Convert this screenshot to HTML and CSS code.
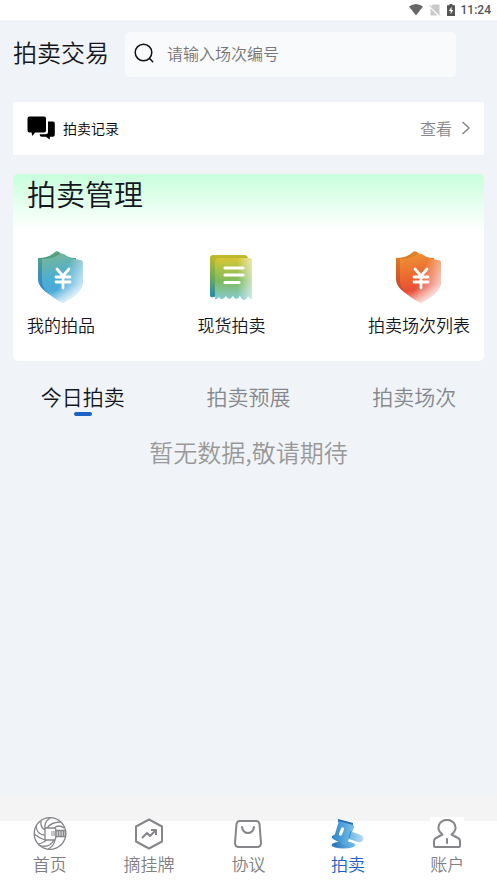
FILE: index.html
```html
<!DOCTYPE html>
<html lang="zh-CN">
<head>
<meta charset="utf-8">
<meta name="viewport" content="width=device-width, initial-scale=1">
<title>拍卖交易</title>
<link rel="stylesheet" href="styles.css">
</head>
<body>
<div class="status">
  <svg width="14" height="12" viewBox="0 0 14 12" aria-hidden="true"><path d="M0 2.6Q7-2.6 14 2.6L7 11.5Z" fill="#666"/></svg>
  <svg width="12" height="12" viewBox="0 0 12 12" aria-hidden="true"><path d="M4 .5h6.5V11L2 2.5ZM1.500 4.300 8.500 11.500h-7Z" fill="#c9c9c9"/><path d="M.5 1 11 11.500" stroke="#bbb"/></svg>
  <svg width="8" height="12" viewBox="0 0 8 12" aria-hidden="true"><path d="M2.500 0h3v1.200H8V12H0V1.200h2.500Z" fill="#555"/><path d="M4.600 2.800 1.800 7h1.800v3.300L6.300 6H4.600Z" fill="#fff"/></svg>
  <span class="clock">11:24</span>
</div>
<header class="header">
  <h1 class="title">拍卖交易</h1>
  <label class="search">
    <svg width="20" height="20" viewBox="0 0 20 20" fill="none" stroke="#111" stroke-width="1.500" stroke-linecap="round" aria-hidden="true"><circle cx="9.500" cy="9.500" r="8.300"/><path d="m15.500 15.500 3.200 3.200"/></svg>
    <input class="search-input" type="search" placeholder="请输入场次编号" aria-label="请输入场次编号">
  </label>
</header>
<main class="main">
  <a class="record" href="#records">
    <svg width="28" height="24" viewBox="0 0 28 24" aria-hidden="true"><path d="M2.500.5H17q2 0 2 2v12q0 2-2 2H8L5.500 20 4.500 16.500h-2q-2 0-2-2v-12q0-2 2-2ZM21 5.500h5q1.800 0 1.800 1.800v11.500q0 2-2 2h-3V23.500l-4-2.700h-4q-2 0-2.300-2.600H18.500q2.500 0 2.500-2.500Z"/></svg>
    <span class="record-name">拍卖记录</span>
    <span class="record-more">查看</span>
    <svg width="10" height="16" viewBox="0 0 10 16" fill="none" stroke="#888" stroke-width="1.500" aria-hidden="true"><path d="m1.500 2 6.500 6-6.500 6"/></svg>
  </a>
  <section class="panel">
    <h2 class="panel-title">拍卖管理</h2>
    <div class="tools">
      <a class="tool" href="#mine">
        <svg class="tool-icon" viewBox="1 0 48 54" aria-hidden="true">
          <defs>
            <linearGradient id="blueBack" x2="0" y2="1"><stop stop-color="#58a578"/><stop offset=".55" stop-color="#388fb9"/><stop offset="1" stop-color="#3186bf"/></linearGradient>
            <linearGradient id="blueFront" x1=".35" y1="0" x2=".55" y2="1"><stop stop-color="#78b69a"/><stop offset=".45" stop-color="#4caed0"/><stop offset=".7" stop-color="#47aadb"/><stop offset="1" stop-color="#cde7f2"/></linearGradient>
            <linearGradient id="fade" x1=".5" y1=".45" x2="1" y2=".72"><stop stop-color="#fff" stop-opacity="0"/><stop offset="1" stop-color="#fff" stop-opacity=".8"/></linearGradient>
          </defs>
          <path d="M2 8Q13 8 19 2q2-1.500 4 0 6 6 17 6v20q0 12-19 20Q2 40 2 29Z" fill="url(#blueBack)"/>
          <path d="M6 9q12 0 18-5 2-1 4 0 6 5 16 6 3 0 3 3v18q0 12-20 22Q6 43 6 31Z" fill="url(#blueFront)"/>
          <path d="M6 9q12 0 18-5 2-1 4 0 6 5 16 6 3 0 3 3v18q0 12-20 22Q6 43 6 31Z" fill="url(#fade)"/>
          <path d="m21 19 6 7 6-7M20 27h14M20 32h14M27 26v12" fill="none" stroke="#fff" stroke-width="2.800" stroke-linecap="round"/>
        </svg>
        <span>我的拍品</span>
      </a>
      <a class="tool" href="#spot">
        <svg class="tool-icon" viewBox="1 0 48 54" aria-hidden="true">
          <defs>
            <linearGradient id="billBack" x2="0" y2="1"><stop stop-color="#c3ba28"/><stop offset=".5" stop-color="#72ad55"/><stop offset="1" stop-color="#2389aa"/></linearGradient>
            <linearGradient id="billFront" x2="0" y2="1"><stop stop-color="#d5c732"/><stop offset=".55" stop-color="#7fba5e"/><stop offset="1" stop-color="#86cbd6"/></linearGradient>
            <linearGradient id="billFade" x1=".6" x2="1"><stop stop-color="#fff" stop-opacity="0"/><stop offset="1" stop-color="#fff" stop-opacity=".6"/></linearGradient>
          </defs>
          <path d="M6 5h31q4 0 4 4v34L6 47q-3 1-3-2V8q0-3 3-3Z" fill="url(#billBack)"/>
          <path d="M12 8h30q3 0 3 3v38q-2 0-4-3-3 6-6 3l-2-3q-4 6-7 0-4 6-7 0-4 6-7 1-2 3-4 2V12q0-4 4-4Z" fill="url(#billFront)"/>
          <path d="M12 8h30q3 0 3 3v38q-2 0-4-3-3 6-6 3l-2-3q-4 6-7 0-4 6-7 0-4 6-7 1-2 3-4 2V12q0-4 4-4Z" fill="url(#billFade)"/>
          <path d="M18 18h18M18 25h18M18 32.500h14" stroke="#fff" stroke-width="3.200" stroke-linecap="round"/>
        </svg>
        <span>现货拍卖</span>
      </a>
      <a class="tool" href="#sessions">
        <svg class="tool-icon" viewBox="1 0 48 54" aria-hidden="true">
          <defs>
            <linearGradient id="redBack" x2="0" y2="1"><stop stop-color="#df8a20"/><stop offset=".5" stop-color="#d75a28"/><stop offset="1" stop-color="#cf3928"/></linearGradient>
            <linearGradient id="redFront" x1=".35" y1="0" x2=".55" y2="1"><stop stop-color="#ed9234"/><stop offset=".45" stop-color="#eb6630"/><stop offset=".7" stop-color="#e84d36"/><stop offset="1" stop-color="#f5c9c4"/></linearGradient>
          </defs>
          <path d="M2 8Q13 8 19 2q2-1.500 4 0 6 6 17 6v20q0 12-19 20Q2 40 2 29Z" fill="url(#redBack)"/>
          <path d="M6 9q12 0 18-5 2-1 4 0 6 5 16 6 3 0 3 3v18q0 12-20 22Q6 43 6 31Z" fill="url(#redFront)"/>
          <path d="M6 9q12 0 18-5 2-1 4 0 6 5 16 6 3 0 3 3v18q0 12-20 22Q6 43 6 31Z" fill="url(#fade)"/>
          <path d="m21 19 6 7 6-7M20 27h14M20 32h14M27 26v12" fill="none" stroke="#fff" stroke-width="2.800" stroke-linecap="round"/>
        </svg>
        <span>拍卖场次列表</span>
      </a>
    </div>
  </section>
  <div class="tabs" role="tablist">
    <button class="tab tab-active" type="button" role="tab" aria-selected="true">今日拍卖</button>
    <button class="tab" type="button" role="tab" aria-selected="false">拍卖预展</button>
    <button class="tab" type="button" role="tab" aria-selected="false">拍卖场次</button>
  </div>
  <p class="empty">暂无数据,敬请期待</p>
</main>
<nav class="nav">
  <a class="nav-item" href="#home">
    <svg class="nav-icon" viewBox="0 0 34 34" fill="none" stroke="#85858a" stroke-width="1.300" aria-hidden="true"><circle cx="17" cy="16.500" r="15.800"/><path d="M12 11h10l1 2v7l-1 3H12ZM12 18Q4 18 3 9M12 12Q11 5 17 1M12 13Q7 10 8 4M14 11q4-6 14-6M21 11q5-4 10 0M12 23Q6 21 1 17M14 23q-6 4-9 4M21 23q-5 9-15 5M22 23q-1 6-7 9"/><path d="M23 13.500h9.500v6H23Z" fill="#ccc"/><path d="M19 14v5M21 14v5M25.500 14v5M28 14v5M30.500 14v5" stroke-width="1"/></svg>
    <span>首页</span>
  </a>
  <a class="nav-item" href="#listing">
    <svg class="nav-icon" viewBox="0 0 34 34" fill="none" stroke="#85858a" stroke-width="2" stroke-linejoin="round" aria-hidden="true"><path d="m17 2.500 13 7v15l-13 7-13-7v-15Z"/><path d="m10 21 5-5 3 3 6-6M19 13h5v5"/></svg>
    <span>摘挂牌</span>
  </a>
  <a class="nav-item" href="#agreement">
    <svg class="nav-icon" viewBox="0 0 34 34" fill="none" stroke="#85858a" stroke-width="2" stroke-linecap="round" aria-hidden="true"><path d="M9 4h16q3 0 3.500 3l1.500 19q0 4-4 4H8q-4 0-4-4L5.500 7Q6 4 9 4Z"/><path d="M11 10q1 6 6 6t6-6"/></svg>
    <span>协议</span>
  </a>
  <a class="nav-item nav-active" href="#auction" aria-current="page">
    <svg class="nav-icon" viewBox="0 0 34 34" aria-hidden="true">
      <defs><linearGradient id="hammer"><stop stop-color="#2e86cf"/><stop offset=".5" stop-color="#62b0e0"/><stop offset="1" stop-color="#b9dcf3"/></linearGradient><linearGradient id="base"><stop stop-color="#236eb4"/><stop offset="1" stop-color="#74c1ed"/></linearGradient></defs>
      <ellipse cx="12.500" cy="28" rx="12" ry="3.500" fill="url(#base)"/>
      <path d="m7 2 15 4v3L7 5ZM1 19l3-1 11 6-1 3L1 21Z" fill="#246bb0"/>
      <path d="m8 4 14 4q2 1 1 3l-2 4 9 3q3 2 2 5-1 3-5 2l-9-3-2 5q-1 2-3 1L2 22q-1-1 0-3l2-2L7 7Z" fill="url(#hammer)"/>
      <path d="m11.500 12-2 5" stroke="#fff" stroke-width="3.200" stroke-linecap="round"/>
      <path d="m20 14-2 7" stroke="#3189c9"/>
    </svg>
    <span>拍卖</span>
  </a>
  <a class="nav-item" href="#account">
    <svg class="nav-icon nav-icon-white" viewBox="0 0 34 34" fill="none" stroke="#85858a" stroke-width="2" stroke-linejoin="round" stroke-linecap="round" aria-hidden="true"><path d="M12.500 17.500C5 12 9 3 17 3s12 9 4.500 14.500L28 21q2 1 2 3v5q0 1-1 1H5q-1 0-1-1v-5q0-2 2-3Z"/><path d="M17 22v4"/></svg>
    <span>账户</span>
  </a>
</nav>
</body>
</html>
```
FILE: styles.css
```css
* {
  box-sizing: border-box;
}

body {
  margin: 0;
  min-height: 100vh;
  display: flex;
  flex-direction: column;
  background: #f0f4f8;
  color: #15171f;
  font-family: "Noto Sans CJK SC", sans-serif;
  font-weight: 350;
}

a {
  color: inherit;
  text-decoration: none;
}

svg {
  display: block;
  flex: none;
}

.status {
  display: flex;
  align-items: center;
  justify-content: flex-end;
  gap: 6px;
  height: 20px;
  padding-right: 6px;
  background: #fff;
}

.clock {
  color: #555;
  font: 500 12px/20px Roboto, sans-serif;
}

.header {
  display: flex;
  align-items: flex-start;
  gap: 16px;
  padding: 12px 41px 0 13px;
}

.title {
  margin: 0;
  font-size: 24px;
  font-weight: inherit;
  line-height: 40px;
}

.search {
  display: flex;
  flex: 1;
  align-items: center;
  gap: 13px;
  height: 45px;
  padding: 0 10px 3px 9px;
  border-radius: 5px;
  background: #f9fafc;
}

.search-input {
  flex: 1;
  min-width: 0;
  padding: 0;
  border: 0;
  outline: 0;
  background: none;
  color: #15171f;
  font: inherit;
  font-size: 16px;
  line-height: 24px;
}

.search-input::placeholder {
  color: #777;
  opacity: 1;
}

.main {
  flex: 1;
  padding-top: 25px;
}

.record {
  display: flex;
  align-items: center;
  height: 53px;
  margin: 0 13px;
  padding: 0 13px 2px 14px;
  background: #fff;
  color: #000;
}

.record-name {
  flex: 1;
  margin-left: 8px;
  font-size: 14px;
}

.record-more {
  margin-right: 9px;
  color: #888;
  font-size: 16px;
}

.panel {
  margin: 19px 13px 0;
  padding: 0 14px 24px;
  border-radius: 5px;
  background: linear-gradient(#c8ffdc, #fff 56px);
}

.panel-title {
  margin: 0;
  font-size: 29px;
  font-weight: inherit;
  line-height: 38px;
}

.tools {
  display: flex;
  justify-content: space-between;
  padding-top: 38px;
}

.tool {
  display: flex;
  flex-direction: column;
  align-items: center;
  gap: 8px;
  font-size: 17px;
  line-height: 25px;
}

.tool-icon {
  width: 48px;
  height: 54px;
}

.tabs {
  display: grid;
  grid-template-columns: repeat(3, 1fr);
  margin-top: 20px;
}

.tab {
  display: flex;
  flex-direction: column;
  align-items: center;
  height: 36px;
  padding: 0;
  border: 0;
  background: none;
  color: #85888c;
  font: inherit;
  font-size: 21px;
  line-height: 31px;
}

.tab-active {
  color: #15171f;
}

.tab-active::after {
  width: 18px;
  height: 4px;
  border-radius: 2px;
  background: #1b62c4;
  content: "";
}

.empty {
  margin: 17px 0 0;
  color: #999;
  font-size: 24px;
  line-height: 36px;
  text-align: center;
}

.nav {
  display: grid;
  grid-template-columns: repeat(5, 1fr);
  padding: 22px 0 9px;
  background: linear-gradient(#f4f4f4 26px, #fff 26px);
}

.nav-item {
  display: flex;
  flex-direction: column;
  align-items: center;
  gap: 1px;
  color: #808084;
  font-size: 17px;
  line-height: 24px;
}

.nav-icon {
  width: 34px;
  height: 34px;
}

.nav-icon-white {
  background: #fff;
}

.nav-active {
  color: #1b62c4;
}
```
